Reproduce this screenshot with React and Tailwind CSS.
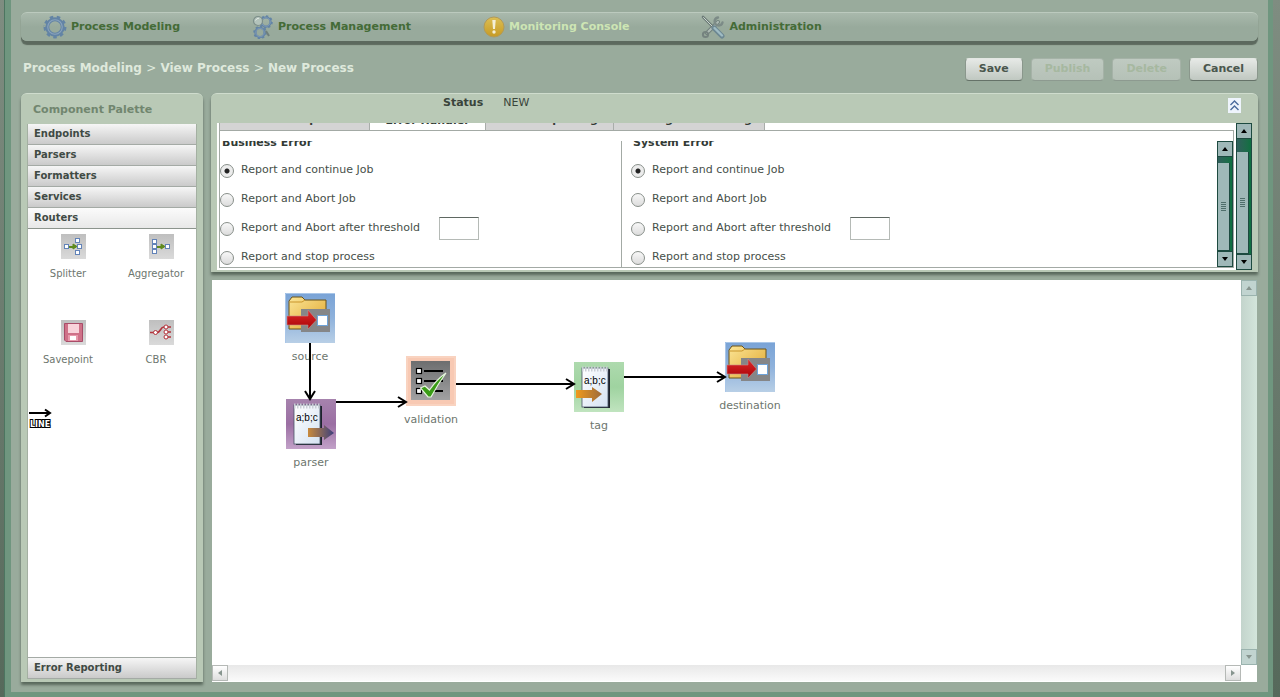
import React from "react";

function Gear({ cx, cy, r, color, teeth = 20 }) {
  return (
    <g fill="none" stroke={color}>
      <circle cx={cx} cy={cy} r={r * 0.7} strokeWidth={r * 0.36} />
      <circle cx={cx} cy={cy} r={r * 0.9} strokeWidth={r * 0.28} pathLength={teeth} strokeDasharray="1 1" />
      <circle cx={cx} cy={cy} r={r * 0.66} stroke="#8aa3bd" strokeWidth={r * 0.1} />
    </g>
  );
}

function GearIcon() {
  return (
    <svg width="24" height="24" viewBox="0 0 24 24" aria-hidden="true">
      <Gear cx={12} cy={12} r={11} color="#6384a5" teeth={18} />
    </svg>
  );
}

function GearsIcon() {
  return (
    <svg width="22" height="24" viewBox="0 0 22 24" aria-hidden="true">
      <Gear cx={14} cy={7} r={6.5} color="#6384a5" teeth={16} />
      <Gear cx={8} cy={17.5} r={6.5} color="#6384a5" teeth={16} />
      <path d="M14 16 L17 21" stroke="#6f7f7c" strokeWidth="2" />
      <circle cx="6" cy="6" r="4.5" fill="#b3c3bb" stroke="#7d8f8a" strokeWidth="1.2" />
      <path d="M3.5 5.5 Q4.5 3.2 7 3.2" stroke="#e2ebe5" fill="none" />
    </svg>
  );
}

function AlertIcon() {
  return (
    <svg width="22" height="24" viewBox="0 0 22 24" aria-hidden="true">
      <defs>
        <linearGradient id="gold" x1="0" y1="0" x2="0" y2="1">
          <stop offset="0" stopColor="#dcbf55" />
          <stop offset="1" stopColor="#c69a24" />
        </linearGradient>
      </defs>
      <circle cx="11" cy="12" r="10" fill="url(#gold)" stroke="#b29a58" />
      <path d="M9.3 5 H12.7 L12 14 H10 Z" fill="#f3efd8" />
      <circle cx="11" cy="17" r="1.7" fill="#f3efd8" />
    </svg>
  );
}

function ToolsIcon() {
  return (
    <svg width="24" height="24" viewBox="0 0 24 24" aria-hidden="true" fill="none" strokeLinecap="round">
      <path d="M6 18 L17 7" stroke="#6f7f7b" strokeWidth="4" />
      <path d="M6 18 L17 7" stroke="#aebbb5" strokeWidth="2.2" />
      <path d="M17 2.5 A4 4 0 1 0 21.5 7.5" stroke="#7c8b87" strokeWidth="2.4" />
      <circle cx="4.5" cy="19.5" r="2.6" stroke="#75837f" strokeWidth="2" />
      <path d="M2 2 L12 12" stroke="#6c7b77" strokeWidth="2.6" />
      <path d="M2.5 2.5 L12 12" stroke="#c9d4ce" strokeWidth="1" />
      <path d="M13 13 L21 21" stroke="#6c8792" strokeWidth="5" />
      <path d="M13.5 13 L21 20.5" stroke="#9fbcc4" strokeWidth="2.4" />
    </svg>
  );
}

const NAV = [
  { label: "Process Modeling", icon: GearIcon },
  { label: "Process Management", icon: GearsIcon },
  { label: "Monitoring Console", icon: AlertIcon, active: true },
  { label: "Administration", icon: ToolsIcon },
];

function Navigation() {
  return (
    <nav className="flex h-[29px] items-center gap-[72px] rounded-md border-t border-[#bccabe] bg-linear-to-b from-[#a9b9ac] to-[#98aa9c] to-50% pl-[22px] shadow-[0_4px_1px_#5c695e]">
      {NAV.map(({ label, icon: Icon, active }) => (
        <a
          key={label}
          href="#"
          className={
            active
              ? "flex items-center gap-1 whitespace-nowrap font-bold text-[#cde5b4]"
              : "flex items-center gap-1 whitespace-nowrap font-bold text-[#446b37]"
          }
        >
          <Icon />
          {label}
        </a>
      ))}
    </nav>
  );
}

const ACTIONS = [
  { label: "Save" },
  { label: "Publish", disabled: true },
  { label: "Delete", disabled: true },
  { label: "Cancel" },
];

function Toolbar() {
  return (
    <div className="flex h-[52px] items-center justify-between pt-[5px] pl-[2px]">
      <div className="pb-1 text-[12px] font-bold text-[#dfe9dc]">
        <a href="#">Process Modeling</a> <span className="font-normal">&gt;</span> <a href="#">View Process</a>{" "}
        <span className="font-normal">&gt;</span> <span>New Process</span>
      </div>
      <div className="flex gap-2">
        {ACTIONS.map(({ label, disabled }) => (
          <button
            key={label}
            type="button"
            disabled={disabled}
            className="h-[23px] rounded-[4px] border border-t-[#e3e7e3] border-r-[#8a978c] border-b-[#657268] border-l-[#8a978c] bg-linear-to-b from-[#e6e9e6] to-[#c0c8c1] px-[13px] font-bold text-[#4a564d] disabled:border-[#a5b2a7] disabled:border-b-[#8d9a90] disabled:from-[#bfcac1] disabled:to-[#b5c1b7] disabled:text-[#a6b8a0]"
          >
            {label}
          </button>
        ))}
      </div>
    </div>
  );
}

function SplitterIcon() {
  return (
    <g>
      <path d="M8 12.5 H12 V10 L16 12.5 L12 15 V13.5 H8 Z" fill="#5f8a1e" stroke="#5f8a1e" />
      <g fill="#fff" stroke="#6283b8">
        <rect x="3.5" y="10.5" width="4" height="4" />
        <rect x="14.5" y="4.5" width="4" height="4" />
        <rect x="16.5" y="10.5" width="4" height="4" />
        <rect x="14.5" y="16.5" width="4" height="4" />
      </g>
    </g>
  );
}

function AggregatorIcon() {
  return (
    <g>
      <path d="M8 12.5 H12 V10 L16 12.5 L12 15 V13.5 H8 Z" fill="#5f8a1e" stroke="#5f8a1e" />
      <g fill="#fff" stroke="#6283b8">
        <rect x="3.5" y="5.5" width="4" height="4" />
        <rect x="3.5" y="10.5" width="4" height="4" />
        <rect x="3.5" y="15.5" width="4" height="4" />
        <rect x="16.5" y="10.5" width="4" height="4" />
      </g>
    </g>
  );
}

function SavepointIcon() {
  return (
    <g>
      <path d="M3.5 3.5 H21.5 V21.5 H5 L3.5 20 Z" fill="#cf7188" stroke="#a84c68" />
      <rect x="7" y="4" width="11" height="9" fill="#f8d3da" />
      <rect x="7" y="15" width="10" height="6" fill="#e799ab" />
      <rect x="9" y="16" width="6" height="4" fill="#fff" />
    </g>
  );
}

function CbrIcon() {
  return (
    <g fill="none" stroke="#b3343c" strokeWidth="1.6">
      <path d="M1 12.5 H8 C12 12.5 11 7 15 7 H22" />
      <path d="M15 12 H22 M15 17 H22" />
      <g fill="#fff" strokeWidth="1">
        <circle cx="6.5" cy="12.5" r="2" />
        <circle cx="17" cy="7" r="2" />
        <circle cx="17" cy="12" r="2" />
        <circle cx="17" cy="17" r="2" />
      </g>
    </g>
  );
}

const ROUTERS = [
  { label: "Splitter", icon: SplitterIcon },
  { label: "Aggregator", icon: AggregatorIcon },
  { label: "Savepoint", icon: SavepointIcon },
  { label: "CBR", icon: CbrIcon },
];

function SectionButton({ label, open }) {
  return (
    <button
      type="button"
      aria-expanded={open}
      className={
        open
          ? "h-[21px] w-full border-b border-[#8c948d] bg-linear-to-b from-[#fbfbfb] to-[#e8e8e8] px-[6px] pb-[2px] text-left text-[10px] font-bold text-[#404a44]"
          : "h-[21px] w-full border-b border-[#a4aaa5] bg-linear-to-b from-[#f6f6f6] to-[#cacaca] px-[6px] pb-[2px] text-left text-[10px] font-bold text-[#404a44]"
      }
    >
      {label}
    </button>
  );
}

function Palette() {
  return (
    <aside className="flex w-[182px] shrink-0 flex-col rounded-t-md border-t border-[#cfdccd] bg-[#b9c9b6] px-[6px] pb-[3px] shadow-[0_3px_3px_#59685c]">
      <h2 className="h-[30px] pl-[6px] leading-[32px] font-bold text-[#71866f]">Component Palette</h2>
      <div className="flex flex-1 flex-col border-x border-[#a4b0a2] bg-white">
        <SectionButton label="Endpoints" open={false} />
        <SectionButton label="Parsers" open={false} />
        <SectionButton label="Formatters" open={false} />
        <SectionButton label="Services" open={false} />
        <SectionButton label="Routers" open />
        <div className="flex-1">
          <ul className="-mx-1 grid grid-cols-2 pt-[5px]">
            {ROUTERS.map(({ label, icon: Icon }) => (
              <li key={label} className="flex h-[86px] flex-col items-center text-[10px] text-[#6d766e]">
                <svg width="25" height="25" viewBox="0 0 25 25" aria-hidden="true" className="ml-[10px] bg-linear-to-b from-[#bfbfbf] to-[#dadada]">
                  <Icon />
                </svg>
                <span className="mt-2 leading-[14px]">{label}</span>
              </li>
            ))}
          </ul>
          <svg width="24" height="22" viewBox="0 0 24 22" className="mt-[2px] ml-[1px]" role="img" aria-label="Line">
            <path d="M0 5 H20 M16 1.5 L21 5 L16 8.5" fill="none" stroke="#000" strokeWidth="2" />
            <text x="1" y="19" fontSize="8" fontWeight="bold" fontFamily="DejaVu Sans, sans-serif" fill="#fff" stroke="#000" strokeWidth="2" paintOrder="stroke">
              LINE
            </text>
          </svg>
        </div>
        <div className="border-t border-[#a4aaa5]">
          <SectionButton label="Error Reporting" open={false} />
        </div>
      </div>
    </aside>
  );
}

function DarkScrollbar({ offset }) {
  return (
    <div className="flex w-4 shrink-0 flex-col border border-[#1d4a40] bg-linear-to-r from-[#2f5f5b] to-[#0d7040]">
      <button type="button" aria-label="Scroll up" className="flex h-[15px] shrink-0 items-center justify-center border-b border-[#1d4a40] bg-[#9fb8b8]">
        <svg width="6" height="4" viewBox="0 0 6 4"><path d="M0 4 L3 0 L6 4 Z" fill="#000" /></svg>
      </button>
      <div className={"flex flex-1 flex-col pr-[2px] " + offset}>
        <div className="flex flex-1 flex-col items-center justify-center gap-px border-r border-b border-[#1d4a40] bg-[#9fb8b8]">
          {[0, 1, 2, 3, 4].map((i) => (
            <span key={i} className="h-px w-[5px] bg-[#4f6e6b]" />
          ))}
        </div>
      </div>
      <button type="button" aria-label="Scroll down" className="flex h-[15px] shrink-0 items-center justify-center border-t border-[#1d4a40] bg-[#9fb8b8]">
        <svg width="6" height="4" viewBox="0 0 6 4"><path d="M0 0 L3 4 L6 0 Z" fill="#000" /></svg>
      </button>
    </div>
  );
}

const ERROR_OPTIONS = [
  "Report and continue Job",
  "Report and Abort Job",
  "Report and Abort after threshold",
  "Report and stop process",
];

function ErrorOptions({ title, name }) {
  return (
    <fieldset className="-mt-[11px]">
      <legend className="pl-[2px] font-bold leading-[26px] text-[#333b36]">{title}</legend>
      {ERROR_OPTIONS.map((label, i) => (
        <div key={label} className="flex h-[29px] items-center">
          <label className="flex w-[207px] items-center gap-[7px] whitespace-nowrap text-[#464f49]">
            <input
              type="radio"
              name={name}
              defaultChecked={i === 0}
              className="size-[14px] appearance-none rounded-full border border-[#888f8a] bg-linear-to-b from-[#f8f8f8] to-[#dcdcdc] checked:bg-[radial-gradient(circle,#222_0_2px,#ececec_3px)]"
            />
            {label}
          </label>
          {i === 2 && (
            <input
              type="text"
              aria-label={title + " threshold"}
              className="ml-3 h-[23px] w-10 border border-[#b5bab6] border-t-[#5f6862] bg-white"
            />
          )}
        </div>
      ))}
    </fieldset>
  );
}

const TABS = [
  { label: "General Properties", style: "w-[151px] border-x border-[#a9adaa] bg-[#d4d4d4]" },
  { label: "Error Handler", style: "w-[115px] bg-white pt-[2px]" },
  { label: "Error Reporting", style: "w-[129px] border-x border-[#a9adaa] bg-[#d4d4d4]" },
  { label: "Message Processing", style: "w-[151px] border-r border-[#a9adaa] bg-[#d4d4d4]" },
];

function PropertiesPanel() {
  return (
    <section className="rounded-t-md border-t border-[#cfdccd] bg-[#b9c9b6] px-[6px] pb-[2px] shadow-[0_3px_3px_#59685c]">
      <div className="flex h-[29px] items-start justify-between pr-[11px]">
        <dl className="flex gap-5 pl-[226px] leading-[18px] text-[#39443b]">
          <dt className="font-bold">Status</dt>
          <dd>NEW</dd>
        </dl>
        <button type="button" aria-label="Collapse" className="mt-1 bg-[#eef4fc]">
          <svg width="13" height="15" viewBox="0 0 13 15" fill="none" stroke="#4a6a9c" strokeWidth="1.4">
            <path d="M2.5 7 L6.5 3 L10.5 7 M2.5 12 L6.5 8 L10.5 12" />
          </svg>
        </button>
      </div>
      <div className="flex h-[147px] gap-[2px] bg-white pl-[2px]">
        <div className="flex min-w-0 flex-1 flex-col pb-[2px]">
          <div role="tablist" className="flex h-[7px] items-end overflow-hidden">
            {TABS.map(({ label, style }) => (
              <button
                key={label}
                type="button"
                role="tab"
                aria-selected={label === "Error Handler"}
                className={"h-[19px] shrink-0 font-bold text-[#333b36] " + style}
              >
                {label}
              </button>
            ))}
          </div>
          <div className="flex min-h-0 flex-1 flex-col border border-[#a3aaa5] pt-[10px]">
            <div className="flex min-h-0 flex-1 overflow-hidden">
              <div className="w-[402px] border-r border-[#a3aaa5]">
                <ErrorOptions title="Business Error" name="business" />
              </div>
              <div className="flex-1 pl-[9px]">
                <ErrorOptions title="System Error" name="system" />
              </div>
              <DarkScrollbar offset="pt-[6px]" />
            </div>
          </div>
        </div>
        <DarkScrollbar offset="pt-[13px]" />
      </div>
    </section>
  );
}

function FolderIcon() {
  return (
    <svg width="50" height="50" viewBox="0 0 50 50" aria-hidden="true">
      <defs>
        <linearGradient id="sky" x1="0" y1="0" x2="0" y2="1">
          <stop offset="0" stopColor="#79a3d6" />
          <stop offset="0.5" stopColor="#8fb2dc" />
          <stop offset="1" stopColor="#b8cfe6" />
        </linearGradient>
        <linearGradient id="folder" x1="0" y1="0" x2="1" y2="1">
          <stop offset="0" stopColor="#fbe596" />
          <stop offset="1" stopColor="#dfa52c" />
        </linearGradient>
        <linearGradient id="red" x1="0" y1="0" x2="0" y2="1">
          <stop offset="0" stopColor="#e02a2a" />
          <stop offset="1" stopColor="#a80408" />
        </linearGradient>
      </defs>
      <rect width="50" height="50" fill="url(#sky)" />
      <path d="M0.5 50 V0.5 H50" fill="none" stroke="#a9c6e8" />
      <path d="M4 36 V8 L7 4 H17 L20 7 H41 V36 Z" fill="url(#folder)" stroke="#6b5218" />
      <path d="M5 9 H17 L20 7" fill="none" stroke="#c9952a" />
      <rect x="16" y="16" width="29" height="23" fill="#858688" />
      <path d="M2 23 H23 V17 L31.5 27 L23 36 V32 H2 Z" fill="url(#red)" stroke="#c78a8a" strokeWidth="0.6" />
      <rect x="32.5" y="22.5" width="10" height="10" fill="#fff" stroke="#6fa3d8" />
    </svg>
  );
}

function ChecklistIcon() {
  return (
    <svg width="50" height="50" viewBox="0 0 50 50" aria-hidden="true">
      <defs>
        <linearGradient id="slate" x1="0" y1="0" x2="0" y2="1">
          <stop offset="0" stopColor="#6d6e6f" />
          <stop offset="1" stopColor="#a1a1a2" />
        </linearGradient>
      </defs>
      <rect width="50" height="50" fill="#f9d3c0" />
      <rect x="2" y="2" width="46" height="46" fill="#f8c9b3" />
      <rect x="5" y="5" width="39" height="39" fill="url(#slate)" />
      <g fill="#fff" stroke="#000" strokeWidth="1.2">
        <rect x="10.5" y="12.5" width="5" height="5" />
        <rect x="10.5" y="22.5" width="5" height="5" />
        <rect x="10.5" y="32.5" width="5" height="5" />
      </g>
      <path d="M18 15 H37 M18 25 H37 M18 35 H37" stroke="#000" strokeWidth="2" />
      <path d="M14.5 32 L19 30 L23.5 34 Q31 23 40 17 Q32 28 25 41 H22 Z" fill="#3a9c16" stroke="#e8f6e0" strokeWidth="1.2" />
    </svg>
  );
}

function NotepadIcon({ id, top, middle, bottom, arrowFrom, arrowTo, arrow }) {
  return (
    <svg width="50" height="50" viewBox="0 0 50 50" aria-hidden="true">
      <defs>
        <linearGradient id={id + "-bg"} x1="0" y1="0" x2="0" y2="1">
          <stop offset="0" stopColor={top} />
          <stop offset="0.5" stopColor={middle} />
          <stop offset="1" stopColor={bottom} />
        </linearGradient>
        <linearGradient id={id + "-arrow"} x1="0" x2="1">
          <stop offset="0" stopColor={arrowFrom} />
          <stop offset="1" stopColor={arrowTo} />
        </linearGradient>
        <linearGradient id={id + "-paper"} x1="0" y1="0" x2="1" y2="1">
          <stop offset="0" stopColor="#fff" />
          <stop offset="1" stopColor="#d5e2f2" />
        </linearGradient>
      </defs>
      <rect width="50" height="50" fill={"url(#" + id + "-bg)"} />
      <rect x="10" y="7" width="26" height="39" fill="#1d222c" />
      <rect x="8" y="6" width="26" height="39" fill={"url(#" + id + "-paper)"} stroke="#4a5568" strokeWidth="0.8" />
      <path d="M8 7 H35" stroke="#c9ced6" strokeWidth="5" strokeDasharray="1.5 1.5" />
      <text x="10" y="22" fontSize="10" fontFamily="Liberation Sans, sans-serif" fill="#000">
        a;b;c
      </text>
      <path d={arrow} fill={"url(#" + id + "-arrow)"} />
    </svg>
  );
}

const NODES = [
  { label: "source", place: "left-[73px] top-[13px]", icon: <FolderIcon /> },
  {
    label: "parser",
    place: "left-[74px] top-[119px]",
    icon: (
      <NotepadIcon id="parser" top="#a683ad" middle="#9b6fa3" bottom="#c2a1c8" arrowFrom="#c98a3c" arrowTo="#3c3f7c" arrow="M22 29 H38 V26 L48 34 L38 41 V38 H22 Z" />
    ),
  },
  { label: "validation", place: "left-[194px] top-[76px]", icon: <ChecklistIcon /> },
  {
    label: "tag",
    place: "left-[362px] top-[82px]",
    icon: (
      <NotepadIcon id="tag" top="#aedaae" middle="#9fd3a0" bottom="#c0e4bf" arrowFrom="#f09a1c" arrowTo="#9c6a3c" arrow="M2 28 H18 V25 L28 32 L18 40 V36 H2 Z" />
    ),
  },
  { label: "destination", place: "left-[513px] top-[62px]", icon: <FolderIcon /> },
];

function LightScrollButton({ label, d, tone }) {
  return (
    <button type="button" aria-label={label} className={"flex size-4 shrink-0 items-center justify-center border " + tone}>
      <svg width="6" height="6" viewBox="0 0 6 6"><path d={d} fill="#87958f" /></svg>
    </button>
  );
}

const TEAL = "border-[#9ab3ae] bg-[#c1d4d0]";
const GRAY = "border-[#b5b9b6] bg-linear-to-b from-white to-[#dedede]";

function Canvas() {
  return (
    <section className="mx-px flex flex-1 flex-col bg-white pb-px">
      <div className="flex flex-1">
        <div className="relative flex-1 overflow-hidden">
          {NODES.map(({ label, place, icon }) => (
            <figure key={label} className={"absolute flex w-[50px] flex-col items-center " + place}>
              {icon}
              <figcaption className="mt-[6px] leading-4 text-[#6d766e]">{label}</figcaption>
            </figure>
          ))}
          <svg width="600" height="200" viewBox="0 0 600 200" className="absolute top-0 left-0" fill="none" stroke="#000" strokeWidth="2" aria-hidden="true">
            <path d="M98 63 V119 M93 111 L98 119 L103 111" />
            <path d="M124 122 H194 M186 117 L194 122 L186 127" />
            <path d="M244 104 H362 M354 99 L362 104 L354 109" />
            <path d="M412 97 H513 M505 92 L513 97 L505 102" />
          </svg>
        </div>
        <div className="flex w-4 shrink-0 flex-col justify-between bg-linear-to-r from-[#c3d4cc] to-[#d3e5db]">
          <LightScrollButton label="Scroll up" d="M0 5 L3 1 L6 5 Z" tone={TEAL} />
          <LightScrollButton label="Scroll down" d="M0 1 L3 5 L6 1 Z" tone={TEAL} />
        </div>
      </div>
      <div className="flex h-4 shrink-0 pr-4">
        <div className="flex flex-1 justify-between bg-linear-to-b from-[#e8e8e8] to-[#fafafa]">
          <LightScrollButton label="Scroll left" d="M5 0 L1 3 L5 6 Z" tone={GRAY} />
          <LightScrollButton label="Scroll right" d="M1 0 L5 3 L1 6 Z" tone={GRAY} />
        </div>
      </div>
    </section>
  );
}

export default function App() {
  return (
    <div className="flex min-h-screen bg-linear-to-b from-[#7f8d81] to-[#56695b] pr-[7px] pl-[5px] font-['DejaVu_Sans',sans-serif] text-[11px]">
      <div className="flex min-w-0 flex-1 flex-col border-x-[5px] border-b-[5px] border-l-[6px] border-[#6f967f] bg-[#99ab9c] px-[10px] pt-3 pb-[10px] shadow-[-1px_0_0_#4c7560]">
        <Navigation />
        <Toolbar />
        <main className="flex flex-1 gap-2">
          <Palette />
          <div className="flex min-w-0 flex-1 flex-col gap-2">
            <PropertiesPanel />
            <Canvas />
          </div>
        </main>
      </div>
    </div>
  );
}
